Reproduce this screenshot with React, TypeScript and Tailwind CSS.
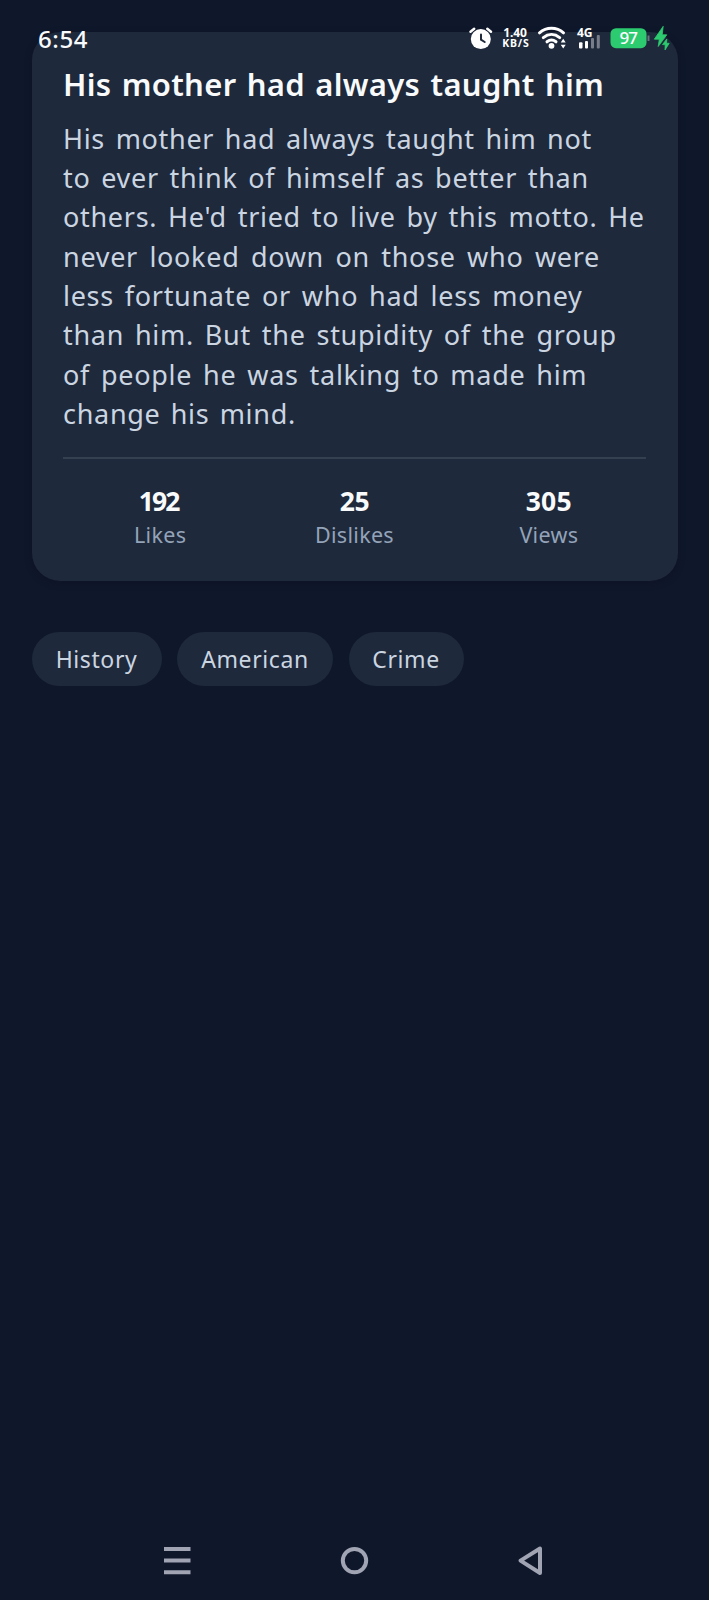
import React from 'react';

const bodyLines = [
  { text: 'His mother had always taught him not', className: '[word-spacing:2.9px]' },
  { text: 'to ever think of himself as better than', className: '[word-spacing:3px]' },
  { text: "others. He'd tried to live by this motto. He", className: '[word-spacing:3.1px]' },
  { text: 'never looked down on those who were', className: '[word-spacing:3.7px]' },
  { text: 'less fortunate or who had less money', className: '[word-spacing:3.2px]' },
  { text: 'than him. But the stupidity of the group', className: '[word-spacing:3.2px]' },
  { text: 'of people he was talking to made him', className: '[word-spacing:3.2px]' },
  { text: 'change his mind.', className: '[word-spacing:2.5px]' },
];

const stats = [
  { value: '192', label: 'Likes', className: 'pr-[3px] tracking-[-1.8px]' },
  { value: '25', label: 'Dislikes', className: 'tracking-[-0.5px]' },
  { value: '305', label: 'Views', className: 'tracking-[0.3px]' },
];

const tags = [
  { name: 'History', className: 'w-[130px]' },
  { name: 'American', className: 'w-[155.5px]' },
  { name: 'Crime', className: 'w-[115px]' },
];

function StatusIcons() {
  return (
    <svg className="absolute left-[450px] top-[10px] h-[60px] w-[259px]" viewBox="0 0 259 60">
      {/* alarm */}
      <circle cx="30.8" cy="29.1" r="10" fill="#fff" />
      <path d="M20.5 21.7l3.7-3M41 21.7l-3.7-3" stroke="#fff" strokeWidth="2.5" strokeLinecap="round" />
      <path d="M31 24.5v5.2l3.7 2.3" stroke="#1e293b" strokeWidth="2" fill="none" strokeLinecap="round" />
      {/* network speed */}
      <g fill="#fff" fontFamily="Noto Sans, sans-serif" fontWeight="700">
        <text x="53.3" y="27" fontSize="12" textLength="23.5">1.40</text>
        <text x="52.3" y="37" fontSize="10.5" textLength="26.5">KB/S</text>
      </g>
      {/* wifi */}
      <g fill="none" stroke="#fff" strokeWidth="3" strokeLinecap="round">
        <path d="M89.5 22.8c7-6 17-6 24 0" />
        <path d="M93.3 27.6c5-4 11.4-4 16.4 0" />
        <path d="M97 31.8c2.8-2.2 6.2-2.2 9 0" />
      </g>
      <circle cx="101.5" cy="35.8" r="2.9" fill="#fff" />
      <path d="M110.7 32.6l2.5-3.8 2.5 3.8zM110.7 34.7h5l-2.5 3.8z" fill="#fff" />
      {/* signal */}
      <text x="127" y="26.5" fontSize="12" fontWeight="700" fill="#fff" fontFamily="Noto Sans, sans-serif" textLength="15.5">4G</text>
      <g fill="#fff">
        <rect x="129" y="32.3" width="3.5" height="6.2" rx="1" />
        <rect x="135" y="31" width="3" height="7.5" rx="1" />
        <rect x="141" y="28" width="3" height="10.5" rx="1" opacity=".4" />
        <rect x="146.8" y="25" width="3" height="13.5" rx="1" opacity=".4" />
      </g>
      {/* battery */}
      <rect x="160.5" y="18.2" width="36" height="20" rx="5.5" fill="#2dcb6f" />
      <path d="M198.5 25.5v5.5" stroke="#6b7280" strokeWidth="2" />
      <text x="178.7" y="34.3" fontSize="17" fontWeight="500" fill="#fff" textAnchor="middle" fontFamily="Noto Sans, sans-serif" textLength="18.5">97</text>
      <g fill="#2dcb6f" stroke="#2dcb6f" strokeWidth=".8" strokeLinejoin="round">
        <path d="M213.2 16.3l-8.9 12.9h5l-1.1 7.3 8.6-11.7h-4.6z" />
        <path d="M216.8 29l-4.3 5.6h2.7l-.2 5.4 4.2-6.7h-2.6z" />
      </g>
    </svg>
  );
}

function NavBar() {
  return (
    <div className="mt-auto flex h-[80px] items-center pl-[164px]">
      <svg className="h-[40px] w-[390px]" viewBox="0 0 390 40" fill="none" stroke="#a0a4b3" strokeWidth="4">
        <path d="M0 9h26.5M0 20.6h26.5M0 32.3h26.5" />
        <circle cx="190.5" cy="20.6" r="11.7" />
        <path d="M376 8.5v24.5L356.5 20.6z" strokeLinejoin="round" />
      </svg>
    </div>
  );
}

export default function App() {
  return (
    <div className="relative flex h-[1600px] w-[709px] flex-col bg-[#0f172a] font-['Noto_Sans',sans-serif]">
      <div className="mx-[31.5px] mt-[31.5px] h-[549px] rounded-[28px] bg-[#1e293b] px-[31.5px] pt-[31px] shadow-[0_2px_6px_rgba(15,15,35,0.5)]">
        <h1 className="h-[56px] text-[31px] leading-[43px] font-semibold tracking-[0.3px] whitespace-nowrap text-[#f8fafc] [word-spacing:2px]">
          His mother had always taught him
        </h1>
        <div className="text-[27px] leading-[39.36px] tracking-[0.7px] text-[#cbd5e1]">
          {bodyLines.map((line) => (
            <p key={line.text} className={`whitespace-nowrap ${line.className}`}>
              {line.text}
            </p>
          ))}
        </div>
        <div className="mt-[24px] grid grid-cols-3 border-t-2 border-[#343f50] pt-[24px] text-center">
          {stats.map((stat) => (
            <div key={stat.label}>
              <p className={`text-[26.5px] leading-[36px] font-bold text-[#f8fafc] ${stat.className}`}>
                {stat.value}
              </p>
              <p className="text-[21.5px] leading-[32px] tracking-[0.3px] text-[#94a3b8]">{stat.label}</p>
            </div>
          ))}
        </div>
      </div>
      <div className="mt-[51px] ml-[31.5px] flex gap-[15.75px]">
        {tags.map((tag) => (
          <span
            key={tag.name}
            className={`flex h-[54px] items-center justify-center rounded-full bg-[#1e293b] pt-px text-[23px] tracking-[0.6px] text-[#cbd5e1] ${tag.className}`}
          >
            {tag.name}
          </span>
        ))}
      </div>
      <NavBar />
      <span className="absolute top-[22px] left-[38px] text-[24px] leading-[33px] font-medium tracking-[0.6px] text-[#f8fafc]">
        6:54
      </span>
      <StatusIcons />
    </div>
  );
}
